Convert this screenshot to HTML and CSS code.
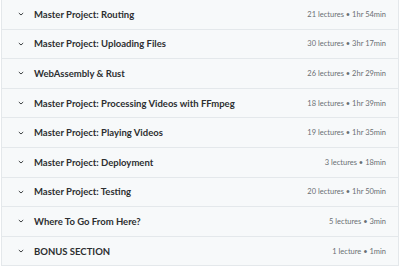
FILE: index.html
```html
<!DOCTYPE html>
<html>
<head>
<meta charset="utf-8">
<title>Course content</title>
<link rel="stylesheet" href="styles.css">
</head>
<body>
<div class="sections">
  <div class="section">
    <span class="chev"><svg width="8" height="8" viewBox="0 0 8 8"><path d="M1.8 3 L4 5 L6.2 3" fill="none" stroke="#3e4143" stroke-width="1"/></svg></span>
    <span class="title">Master Project: Routing</span>
    <span class="meta">21 lectures • 1hr 54min</span>
  </div>
  <div class="section">
    <span class="chev"><svg width="8" height="8" viewBox="0 0 8 8"><path d="M1.8 3 L4 5 L6.2 3" fill="none" stroke="#3e4143" stroke-width="1"/></svg></span>
    <span class="title">Master Project: Uploading Files</span>
    <span class="meta">30 lectures • 3hr 17min</span>
  </div>
  <div class="section">
    <span class="chev"><svg width="8" height="8" viewBox="0 0 8 8"><path d="M1.8 3 L4 5 L6.2 3" fill="none" stroke="#3e4143" stroke-width="1"/></svg></span>
    <span class="title">WebAssembly &amp; Rust</span>
    <span class="meta">26 lectures • 2hr 29min</span>
  </div>
  <div class="section">
    <span class="chev"><svg width="8" height="8" viewBox="0 0 8 8"><path d="M1.8 3 L4 5 L6.2 3" fill="none" stroke="#3e4143" stroke-width="1"/></svg></span>
    <span class="title">Master Project: Processing Videos with FFmpeg</span>
    <span class="meta">18 lectures • 1hr 39min</span>
  </div>
  <div class="section">
    <span class="chev"><svg width="8" height="8" viewBox="0 0 8 8"><path d="M1.8 3 L4 5 L6.2 3" fill="none" stroke="#3e4143" stroke-width="1"/></svg></span>
    <span class="title">Master Project: Playing Videos</span>
    <span class="meta">19 lectures • 1hr 35min</span>
  </div>
  <div class="section">
    <span class="chev"><svg width="8" height="8" viewBox="0 0 8 8"><path d="M1.8 3 L4 5 L6.2 3" fill="none" stroke="#3e4143" stroke-width="1"/></svg></span>
    <span class="title">Master Project: Deployment</span>
    <span class="meta">3 lectures • 18min</span>
  </div>
  <div class="section">
    <span class="chev"><svg width="8" height="8" viewBox="0 0 8 8"><path d="M1.8 3 L4 5 L6.2 3" fill="none" stroke="#3e4143" stroke-width="1"/></svg></span>
    <span class="title">Master Project: Testing</span>
    <span class="meta">20 lectures • 1hr 50min</span>
  </div>
  <div class="section">
    <span class="chev"><svg width="8" height="8" viewBox="0 0 8 8"><path d="M1.8 3 L4 5 L6.2 3" fill="none" stroke="#3e4143" stroke-width="1"/></svg></span>
    <span class="title">Where To Go From Here?</span>
    <span class="meta">5 lectures • 3min</span>
  </div>
  <div class="section">
    <span class="chev"><svg width="8" height="8" viewBox="0 0 8 8"><path d="M1.8 3 L4 5 L6.2 3" fill="none" stroke="#3e4143" stroke-width="1"/></svg></span>
    <span class="title">BONUS SECTION</span>
    <span class="meta">1 lecture • 1min</span>
  </div>
</div>
</body>
</html>
```

FILE: styles.css
```css
body {margin:0;background:#fff;font-family:"Lato","Liberation Sans",sans-serif;}
.sections {width:396px;margin:-1px 0 0 1px;border:1px solid #e4e8eb;}
.section {display:flex;align-items:center;height:28.6px;padding:0 12px 0 15px;background:#f7f9fa;border-bottom:1px solid #e4e8eb;}
.section:last-child {border-bottom:0;}
.chev {display:flex;width:17px;}
.title {flex:1;font-size:9.5px;font-weight:700;color:#2d2f31;}
.meta {font-size:7.5px;color:#6a6f73;}
```
